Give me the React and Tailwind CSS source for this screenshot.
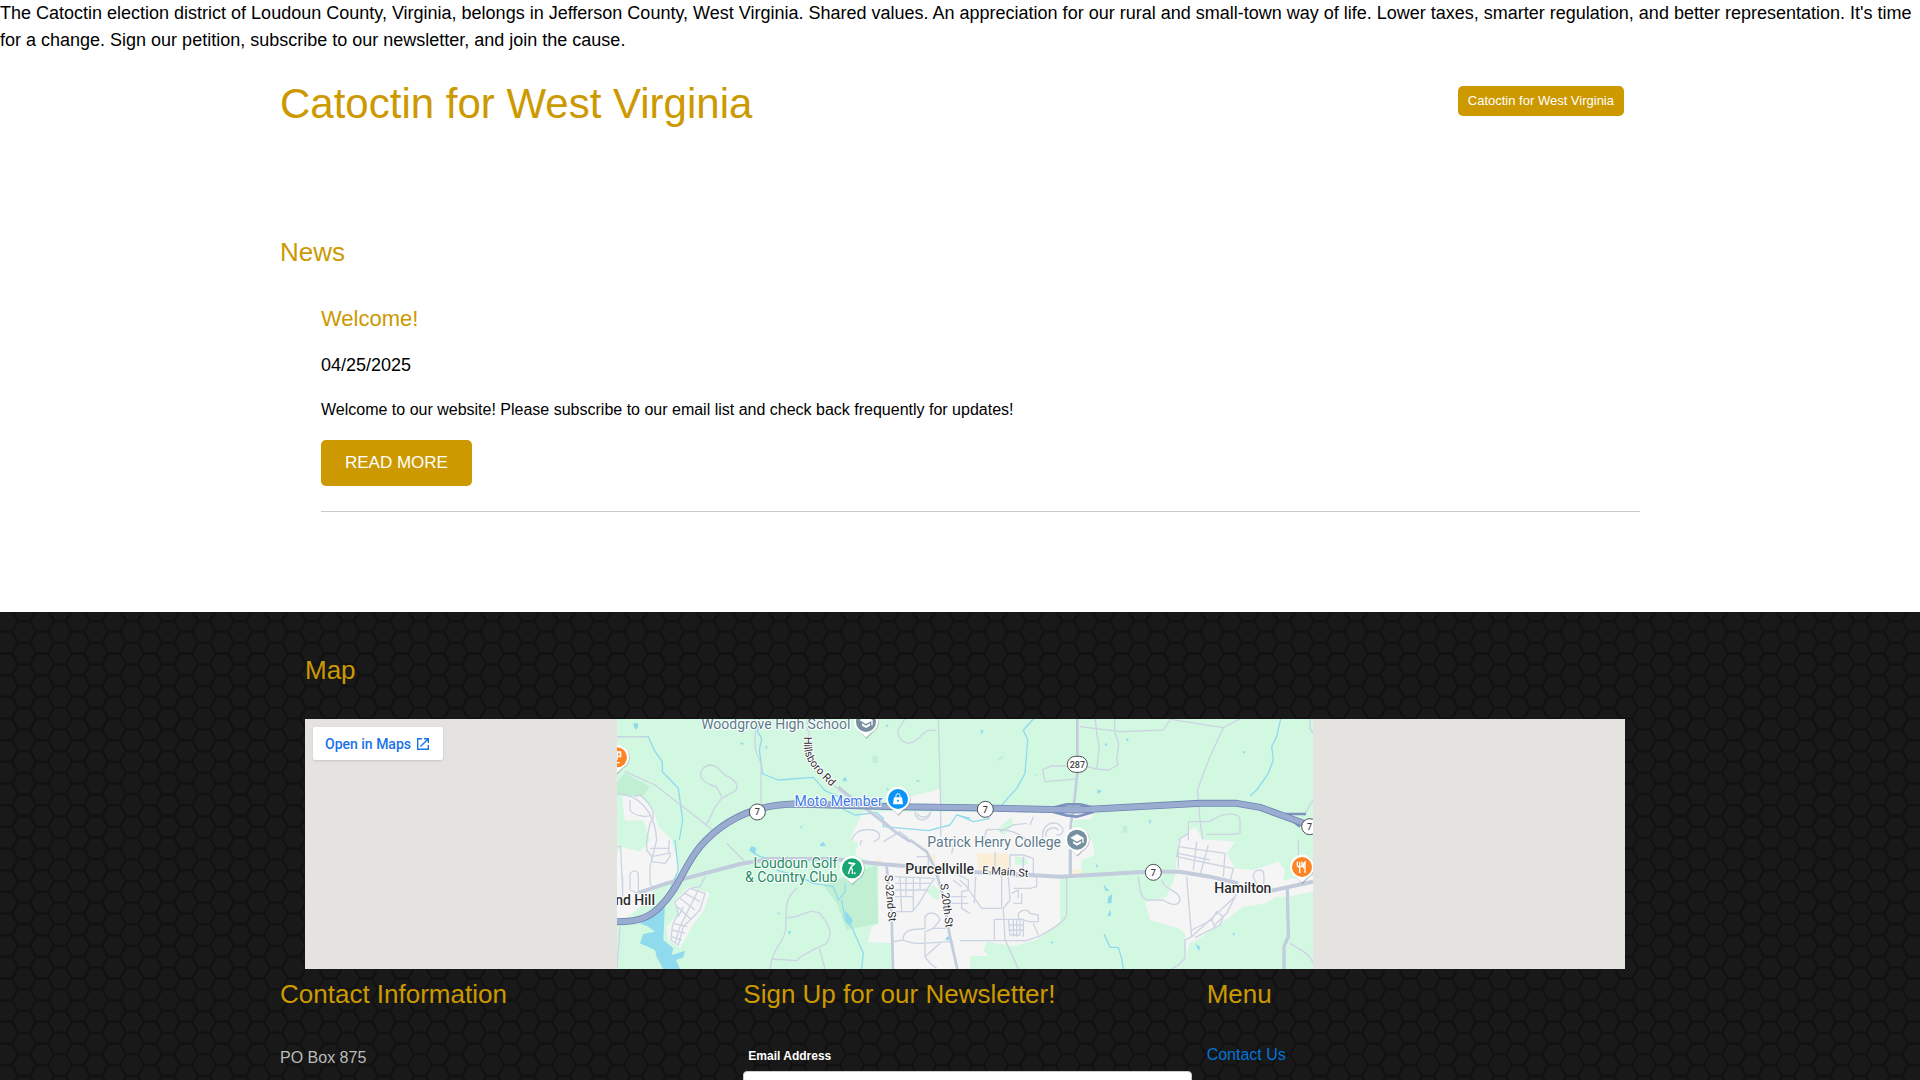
import React from "react";

const ROAD_MINOR = [
  "M51 80H140",
  "M463 27C475 70 455 90 470 130L483 160V282",
  "M622 27V60C640 70 610 100 618 130C640 180 700 225 745 262C800 300 850 320 885 365L935 395",
  "M1010 61H985C960 70 960 95 925 100C900 95 885 70 900 50L915 27",
  "M1015 27L1022 285L1022 380",
  "M395 248L365 265L350 285C330 310 340 320 316 345M365 260L350 232C335 222 320 225 310 210C290 190 310 165 335 165C365 170 355 190 385 200C415 215 420 240 395 248",
  "M75 185L165 225L345 365M380 400L435 455",
  "M51 252C110 250 165 300 170 390L150 470V520L160 535",
  "M90 270V300C100 315 135 325 155 315M105 260L120 255C160 285 170 320 150 340L140 390V420L155 440L205 430L208 390",
  "M155 440V455L195 460L210 440V425M150 415H205",
  "M51 410H62L68 550M90 490Q105 475 115 490V550L90 540V490M68 500V560M60 650L51 775",
  "M225 575L270 535L315 550L300 600L250 650L235 705L212 690L218 645L235 610L225 575M240 565L285 600M255 550L300 575M232 590L275 630M220 640L262 650M217 660L255 670M213 680L245 690M250 590L235 620M295 540L265 600L240 650L225 700",
  "M315 500L300 530L270 535",
  "M590 535C550 570 560 600 557 660C550 700 530 700 515 750L510 777M557 622C600 630 620 590 660 610C690 650 700 670 680 700C640 720 600 735 590 752L515 747M658 715L675 777",
  "M785 390L780 405M755 390C765 360 790 355 820 360C850 370 840 390 820 395M850 395L900 365L925 385M945 305C945 340 990 335 992 305M950 310C960 325 985 325 990 308",
  "M885 500L1000 505M885 520H990M885 540H985M885 605H935C960 590 980 530 1005 505M900 500L905 605M918 500V560M940 500V600M960 500V540M885 560H940",
  "M880 695L910 690V680C920 650 960 660 975 655V620C990 600 1015 610 1020 630L1000 655L975 665V740L990 760L1010 775M910 690C950 710 1000 695 1060 695M1000 655H1050M975 740L1020 700",
  "M1050 480L1105 510V540L1085 545V595L1110 610M1050 580H1105M1050 560H1100M950 440H985V470M1040 395L1060 410L1055 430M1060 510L1085 530",
  "M1127 500L1123 580M1080 510L1100 530L1145 595H1205V500L1185 480V425M1210 595L1215 690L1225 710L1255 777M1210 595L1230 570L1225 500M1400 500V615C1390 640 1350 660 1315 680L1280 692H1080",
  "M1230 435H1270L1300 445V490H1270M1235 500H1310V530L1290 535H1240M1230 435V480M1270 440V480M1235 550L1255 540V565M1240 580H1265V550",
  "M1183 628H1270V680M1183 628V690M1225 628L1230 675H1260V628M1240 628V680M1250 628V680M1225 645H1270M1225 660H1270M1255 625V610C1270 595 1285 600 1290 610L1315 615V635H1285L1255 625M1300 640L1315 675",
  "M1330 390C1320 355 1345 335 1370 340C1400 355 1390 375 1370 375M1340 380C1330 360 1360 345 1375 360M1200 365L1240 345L1280 340M1150 390L1160 360C1200 355 1250 360 1280 390M1290 345L1300 320",
  "M1440 50L1560 65L1690 60L1712 27L1735 32L1870 53L1920 27M1870 53L1830 140L1792 240L1800 330L1808 388M1486 27L1490 70L1498 110L1490 175M1544 27V65L1556 100L1550 150L1555 165L1525 180L1490 177L1460 170L1430 172M1430 207L1335 215L1328 178L1355 168H1420",
  "M1765 390V335H1830L1845 325C1880 305 1920 310 1920 330V370L1890 373H1820M1765 370L1735 390",
  "M2130 27V55L2139 70M2139 270L2110 320M2095 390V440",
  "M1615 500C1620 540 1620 560 1640 570H1690C1710 585 1735 590 1740 570C1740 540 1690 540 1685 510",
  "M1735 410V475M1735 410L1875 430L1870 500M1740 390L1730 440L1850 465L1900 475L1890 515M1735 430L1830 450M1825 405L1800 495M1790 395L1780 480",
  "M1760 500L1768 600L1775 680L1755 690V745L1735 765L1715 777M1775 680L1905 560L1910 550M1775 660L1835 630L1850 605L1870 620L1860 645L1785 683M1835 630L1845 650M1905 560L1880 610L1840 650",
  "M1970 520C1950 495 1965 480 1980 480C1993 480 1993 495 1991 522M2070 700C2100 720 2130 730 2139 760",
];

const ROAD_MAJOR = [
  "M118 548L200 520L420 462L510 447H700L850 463L1000 475",
  "M1070 482L1150 488L1290 495L1380 500L1640 485H1740L1830 500L1915 520M2000 545L2139 515",
];

const STREAMS = [
  "M51 80H145L165 125L187 155V185L235 235L248 330L238 390M225 390L235 480L210 540",
  "M478 27L473 65L485 85L478 120L488 192L535 210L640 202L675 242L740 270L730 298L765 315L830 308L850 325V350L985 362L1050 345L1070 315L1110 325",
  "M1300 27L1270 60L1283 90L1275 190L1250 235L1205 285M1080 318L1120 335L1170 325",
  "M2042 27L2030 80L2015 110L2020 150L2005 190L1970 240L1950 258",
  "M455 425L480 440L530 450M530 480L600 500L640 520L700 530L715 570L735 545V520M725 570L735 630L755 650L790 730L785 777",
  "M1512 672L1530 712H1555L1565 745L1570 777",
];

const PONDS =
  "M100 40h14v12l-6 8-6-8zM420 97l12 2-6 7zM494 105l10 8-6 3zM728 208l8-8 6 14h-14zM950 210l12 4-12 3zM600 350l8-4-4 10zM859 42l8 6-8 4zM860 233l8 6-8 3zM447 420l8-12 14 6-4 20zM660 403l10-8 8 14h-16zM533 605l10 10-10-4zM564 662l10 2-6 12zM1036 685l12-8-2 14h-8zM1142 60l10 2-10 12zM1302 190l14 8-8-2zM1512 104l10-6-2 10zM1577 85l10 2-6 8zM1492 238l14 6-14 8zM1647 328l8 6-6 8zM1927 123l12 2-8 6zM1510 522l18 22-12-2zM1525 560l12-8-3 28h-12zM1522 620l8-22 4 18zM1785 700l16 12-4 12zM1487 458l8 14h-6zM1898 640l8 8zM1350 696l10-2-4 8zM1897 668l8 2-4 8z";

const HIGHWAY =
  "M51 635C120 635 150 620 180 590C240 530 250 470 300 410C370 330 460 285 580 282L890 290L1110 293L1430 300L1800 280H1910L1980 292L2139 350";

const HEX_PATH = "M-1 10.8H12L18 0H30L36 10.8M12 10.8L18 21.7H30L36 10.8H37";

function Pin({ x, y, color, children }) {
  return (
    <g transform={`translate(${x} ${y})`}>
      <path d="M0 48L-17 30A36 36 0 1 1 17 30Z" fill="#6b7280" opacity=".4" transform="translate(2 3)" />
      <path d="M0 46L-17 31A36 36 0 1 1 17 31Z" fill="#fff" />
      <circle r="30" fill={color} />
      {children}
    </g>
  );
}

function Shield({ x, y, label, wide }) {
  const half = wide ? 30 : 24;
  return (
    <g transform={`translate(${x} ${y})`}>
      <rect x={-half} y="-24" width={half * 2} height="48" rx="24" fill="#fff" stroke="#4a4f58" strokeWidth="3" />
      <text y="10" textAnchor="middle" fontSize="27" fontWeight="500" fill="#3c4043">
        {label}
      </text>
    </g>
  );
}

function Mortarboard() {
  return <path d="M-20 -6L0 -17L20 -6V10H16V-3L0 6ZM-12 4L0 11L12 4V11L0 18L-12 11Z" fill="#fff" />;
}

function TownMap() {
  return (
    <svg
      className="block h-[250px] w-[696px] shrink-0 font-[Roboto,sans-serif]"
      viewBox="51 27 2088 750"
      role="img"
      aria-label="Map of Purcellville"
    >
      <rect x="51" y="27" width="2088" height="750" fill="#d3f8e2" />
      <path
        d="M51 215L75 190L150 230L125 262L51 250ZM670 525L830 465L835 640L740 660L710 580ZM818 137h14v22h-14zM1568 348h14v20h-14zM1190 150l20-15v8l-14 10z"
        fill="#c0efd3"
      />
      <g fill="#f5f5f5">
        <path d="M66 260L120 258L160 300L175 350L215 390L240 480L215 510L130 560L160 572L120 592L51 645V430L65 410L120 425L150 390L130 330L75 332Z" />
        <path d="M225 570L265 530L328 548L312 600L275 650L240 715L205 690L200 650L235 610Z" />
        <path d="M925 260L1020 238V290H850Z" />
        <path d="M790 305H1480L1475 328L1425 330L1440 380L1475 390L1485 435L1445 450L1442 505H1380V635L1310 690L1240 708L1160 695L1080 695V735L1155 725L1165 738L1110 738L1070 777H880V700L803 697L815 650L835 640V465L765 435L775 400L750 385Z" />
        <path d="M1785 350L1808 388L1905 395L1880 430L1905 475L1960 480L2035 455L2055 480L2050 510L2139 498V545L2065 560L2030 560L2000 580L1930 590L1865 640L1790 690L1768 700L1760 740L1755 670L1735 655L1650 630L1635 575L1700 560L1725 500L1735 390Z" />
        <path d="M1080 695H1160L1150 725L1155 735H1080L1050 777H1110V740L1080 735Z" />
      </g>
      <g fill="#d3f8e2">
        <path d="M1425 325L1445 350L1435 385L1410 370ZM1240 345L1210 375L1190 360L1235 320ZM1380 508H1400V600L1380 595Z" />
        <path d="M803 698L870 700V777H790ZM980 545L1000 522L1020 545L1015 570L1000 565ZM1245 440L1275 442L1285 460L1270 468L1245 462Z" />
      </g>
      <path d="M1130 430H1225L1230 475L1190 490L1135 480ZM1420 478H1445V490L1420 495ZM828 448h18v14h-18zM980 440L1005 430V455H985Z" fill="#faeed6" />
      <g fill="#90daee">
        <path d="M120 640L165 600L195 580L190 690L220 715L215 735L255 722L250 742L228 750L240 777H190L170 742L165 720L120 700L130 672L165 665L145 650Z" />
        <path d={PONDS} />
        <path d="M735 600L758 630L755 642L738 638Z" />
      </g>
      <g fill="none" strokeLinejoin="round">
        <g stroke="#90daee" strokeWidth="4">
          {STREAMS.map((d) => (
            <path key={d} d={d} />
          ))}
        </g>
        <g stroke="#ccd4e2" strokeWidth="4">
          {ROAD_MINOR.map((d) => (
            <path key={d} d={d} />
          ))}
        </g>
        <g stroke="#c3ccdc" strokeWidth="12">
          {ROAD_MAJOR.map((d) => (
            <path key={d} d={d} />
          ))}
        </g>
        <g stroke="#c3ccdc" strokeWidth="8">
          <path d="M1432 27V190L1420 300L1412 345V495M1410 420V500M860 470L875 620L879 777M930 390L980 425L1005 475L1030 560L1050 680L1072 777M715 230C800 300 830 320 885 365L930 395" />
          <path d="M2062 535L2065 680L2052 710V777" strokeWidth="10" />
        </g>
        <path d="M1360 293L1400 283H1440L1480 293M1360 306L1400 316L1430 320L1480 306M2050 312H2118M2060 318L2100 350" stroke="#7d92bd" strokeWidth="8" />
        <path d={HIGHWAY} stroke="#7084b3" strokeWidth="21" />
        <path d={HIGHWAY} stroke="#9aadd0" strokeWidth="16" />
      </g>

      <Shield x={472} y={306} label="7" />
      <Shield x={1156} y={298} label="7" />
      <Shield x={1660} y={487} label="7" />
      <Shield x={2129} y={350} label="7" />
      <Shield x={1432} y={163} label="287" wide />

      <Pin x={51} y={142} color="#ff8426">
        <path d="M-10 -18H13V0H2V8H-4V0H-10ZM-6 14H8V18H-6ZM3 -12V-5H8V-12Z" fill="#fff" fillRule="evenodd" />
      </Pin>
      <Pin x={798} y={36} color="#7690a0">
        <Mortarboard />
      </Pin>
      <Pin x={894} y={267} color="#0a94f6">
        <path d="M-12 -5H12L15 16H-15Z" fill="#fff" />
        <path d="M-6 -4V-10A6 6 0 0 1 6 -10V-4" fill="none" stroke="#fff" strokeWidth="3" />
        <circle cy="5" r="3" fill="#0a94f6" />
      </Pin>
      <Pin x={756} y={475} color="#18a673">
        <path d="M-11 -16L6 -12L-3 -4L1 4V17M-3 -4L-7 5L-11 17M-10 -17L10 -14" fill="none" stroke="#fff" strokeWidth="4" />
        <circle cx="8" cy="15" r="3" fill="#fff" />
      </Pin>
      <Pin x={1431} y={389} color="#7690a0">
        <Mortarboard />
      </Pin>
      <Pin x={2106} y={471} color="#ff8426">
        <path d="M-14 -16V-6Q-14 0 -7 0Q0 0 0 -6V-16M-7 -16V18M9 18V-15Q3 -10 4 2H9" fill="none" stroke="#fff" strokeWidth="4" />
      </Pin>

      <g fontSize="42" strokeWidth="6" strokeLinejoin="round" paintOrder="stroke" stroke="#ffffff">
        <g textAnchor="end">
          <text x="751" y="58" fill="#5c7a8c">Woodgrove High School</text>
          <text x="848" y="289" fill="#3b78e7">Moto Member</text>
          <text x="712" y="475" fill="#1d8a63">Loudoun Golf</text>
          <text x="712" y="517" fill="#1d8a63">&amp; Country Club</text>
          <text x="1383" y="411" fill="#5c7a8c">Patrick Henry College</text>
          <text x="165" y="585" fill="#2b2d31" fontWeight="500">nd Hill</text>
        </g>
        <g fill="#2b2d31" fontWeight="500">
          <text x="916" y="493">Purcellville</text>
          <text x="1843" y="549">Hamilton</text>
        </g>
        <g fill="#2b2d31" fontSize="33">
          <text transform="translate(1146 491) rotate(4)">E Main St</text>
          <text transform="translate(854 496) rotate(85)">S 32nd St</text>
          <text transform="translate(1021 522) rotate(83)">S 20th St</text>
          <path id="hillsboro" d="M612 80V105C612 150 640 180 700 236" fill="none" stroke="none" />
          <text>
            <textPath href="#hillsboro">Hillsboro Rd</textPath>
          </text>
        </g>
      </g>
    </svg>
  );
}

function HexBackground() {
  return (
    <svg className="absolute inset-0 size-full" aria-hidden="true">
      <defs>
        <pattern id="hex" width="36" height="65" y="9" patternUnits="userSpaceOnUse">
          {[-21.67, 0, 21.67, 43.33].map((y) => (
            <g key={y} fill="none" transform={`translate(0 ${y})`}>
              <path d={HEX_PATH} stroke="#141414" strokeWidth="3" />
              <path d={HEX_PATH} stroke="#0f0f0f" strokeWidth="1" />
            </g>
          ))}
        </pattern>
      </defs>
      <rect width="100%" height="100%" fill="url(#hex)" />
    </svg>
  );
}

function SectionTitle({ children }) {
  return <h2 className="text-[26px] leading-[30px] text-[#cc9900]">{children}</h2>;
}

export default function App() {
  return (
    <div className="min-h-screen bg-white font-['Liberation_Sans',Arial,sans-serif] text-black">
      <p className="text-[18px] leading-[27px]">
        The Catoctin election district of Loudoun County, Virginia, belongs in Jefferson County, West Virginia. Shared
        values. An appreciation for our rural and small-town way of life. Lower taxes, smarter regulation, and better
        representation. It's time for a change. Sign our petition, subscribe to our newsletter, and join the cause.
      </p>

      <header className="mx-auto flex max-w-[1390px] items-start justify-between px-[15px] pt-[27px]">
        <h1 className="text-[42px] leading-[46px] text-[#cc9900]">Catoctin for West Virginia</h1>
        <a href="#home" className="mt-[5px] mr-4 rounded-[5px] bg-[#cc9900] px-[10px] text-[13px] leading-[30px] text-white">
          Catoctin for West Virginia
        </a>
      </header>

      <main className="mx-auto max-w-[1390px] px-[15px] pt-[110px] pb-[100px]">
        <SectionTitle>News</SectionTitle>
        <article className="mt-[39px] ml-[41px] border-b border-[#c8c8c8] pb-[25px]">
          <h3 className="text-[22px] leading-[26px] text-[#cc9900]">Welcome!</h3>
          <p className="mt-5 text-[18px] leading-[27px]">04/25/2025</p>
          <p className="mt-[19px] text-base">
            Welcome to our website! Please subscribe to our email list and check back frequently for updates!
          </p>
          <button type="button" className="mt-[18px] block rounded-[5px] bg-[#cc9900] px-6 text-[17px] leading-[46px] text-white">
            READ MORE
          </button>
        </article>
      </main>

      <footer className="relative bg-[#191919] pt-[43px] pb-12">
        <HexBackground />
        <div className="relative mx-auto max-w-[1390px] px-[15px]">
          <section className="mr-[15px] ml-[25px]">
            <SectionTitle>Map</SectionTitle>
            <div className="relative mt-[34px] flex justify-center overflow-hidden bg-[#e5e3df]">
              <TownMap />
              <a
                href="#map"
                className="absolute top-2 left-2 flex h-[33px] w-[130px] items-center gap-[5px] rounded-xs bg-white pl-3 font-[Roboto,sans-serif] text-sm font-medium text-[#1a73e8] shadow"
              >
                Open in Maps
                <svg className="size-[14px]" viewBox="0 0 14 14" fill="none" stroke="currentColor" strokeWidth="1.4" aria-hidden="true">
                  <path d="M6 1.7H1.7V12.3H12.3V8M8 1.7H12.3V6M12.3 1.7L4.5 9.5" />
                </svg>
              </a>
            </div>
          </section>

          <div className="-mr-[15px] grid grid-cols-3 gap-x-[15px] pt-[10px]">
            <section>
              <SectionTitle>Contact Information</SectionTitle>
              <p className="mt-[37px] text-base text-[#bbbbbb]">PO Box 875</p>
            </section>
            <form>
              <SectionTitle>Sign Up for our Newsletter!</SectionTitle>
              <label htmlFor="email" className="mt-[38px] block pl-[5px] text-xs leading-[18px] font-bold text-white">
                Email Address
              </label>
              <input id="email" type="email" className="mt-[6px] block h-9 w-full rounded-[4px] border border-[#cccccc] bg-white px-2 text-black" />
            </form>
            <nav>
              <SectionTitle>Menu</SectionTitle>
              <a href="#contact" className="mt-[34px] block text-base text-[#0275d8]">
                Contact Us
              </a>
            </nav>
          </div>
        </div>
      </footer>
    </div>
  );
}
